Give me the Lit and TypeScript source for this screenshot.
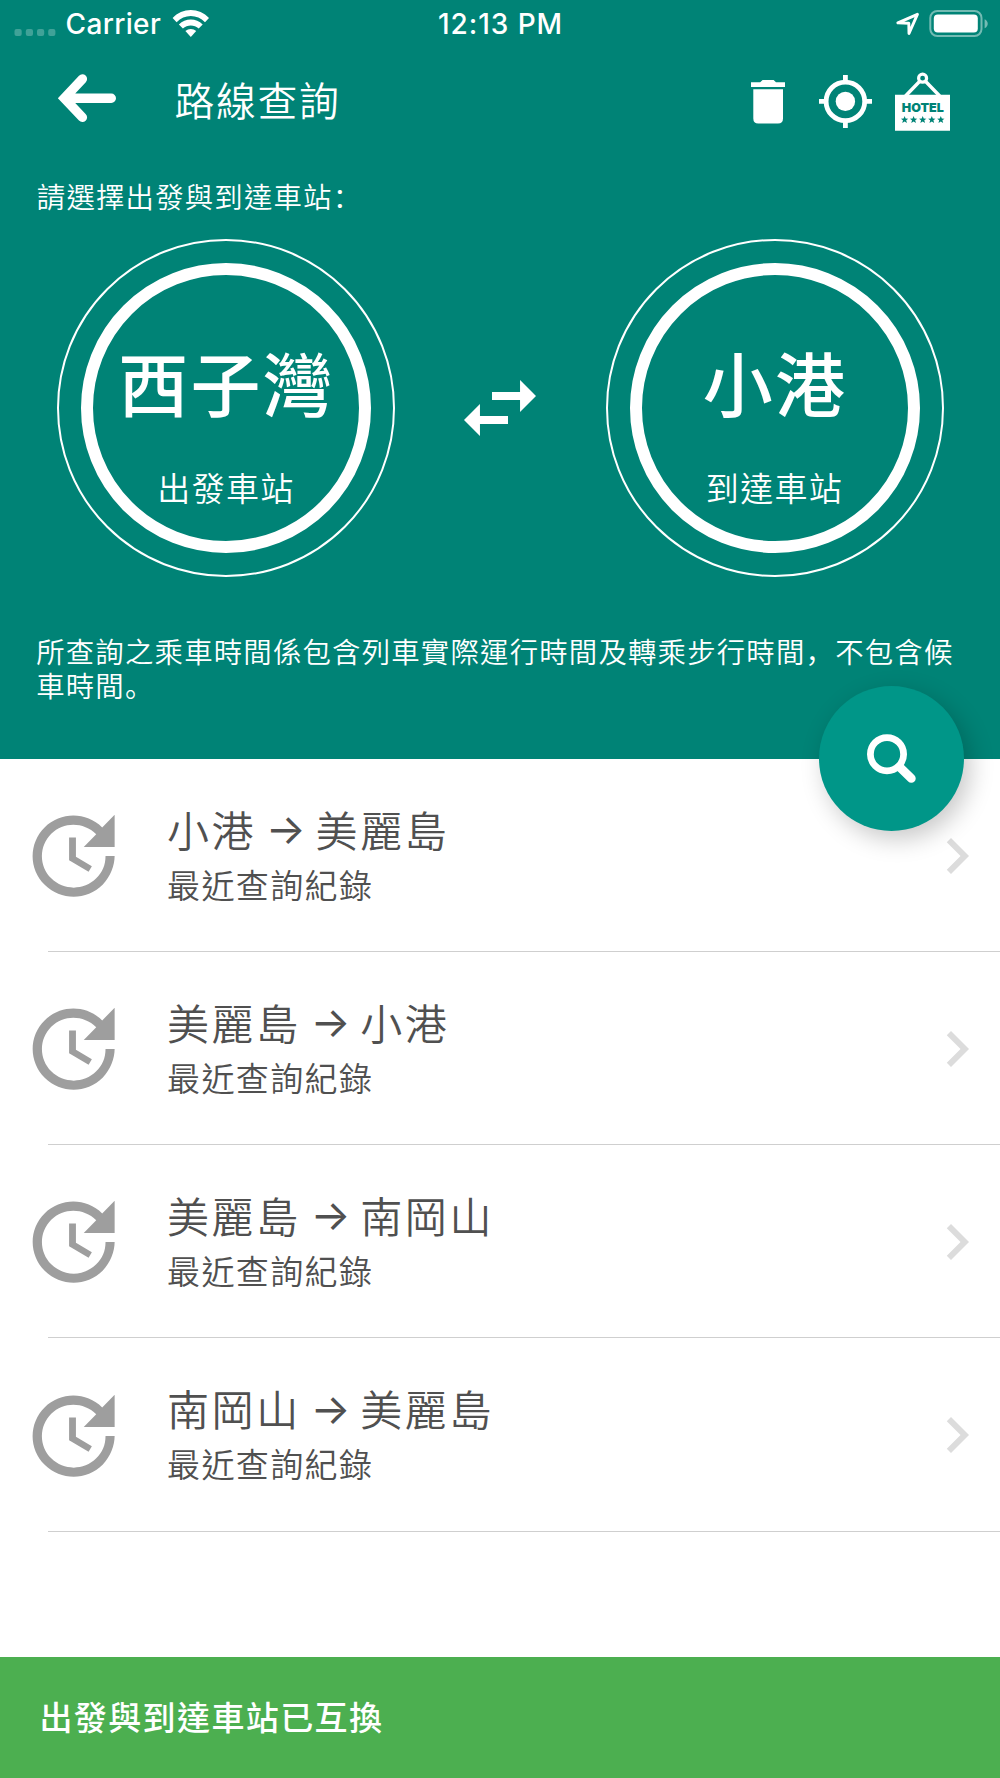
import { LitElement, html, css, svg } from "lit";
import { customElement, property } from "lit/decorators.js";

const FONT = css`"Noto Sans CJK TC", "Noto Sans CJK SC", sans-serif`;

const STAR = "M0 -3.8L1 -1.2L3.7 -1.15L1.6 .5L2.35 3.2L0 1.65L-2.35 3.2L-1.6 .5L-3.7 -1.15L-1 -1.2Z";

@customElement("status-bar")
class StatusBar extends LitElement {
  static styles = css`
    :host { display: flex; height: 48px; align-items: center; justify-content: space-between;
      font: 450 28px/48px Inter, sans-serif; color: #fff; }
    .side { display: flex; align-items: center; flex: 1 1 0; height: 48px; }
    .right { justify-content: flex-end; }
    .dots { margin-left: 14px; }
    .carrier { width: 106px; margin-left: 9.5px; letter-spacing: 0.35px; white-space: nowrap; }
    .wifi { margin-left: 0.5px; }
    .time { letter-spacing: 0.95px; margin-right: -1px; }
    svg { display: block; flex: none; }
  `;
  render() {
    return html`
      <div class="side">
        <svg class="dots" width="42" height="48" fill="#fff" fill-opacity=".25">
          ${[0.5, 11.8, 23, 34.2].map((x) => svg`<rect x=${x} y="29" width="7.2" height="7" rx="2" />`)}
        </svg>
        <span class="carrier">Carrier</span>
        <svg class="wifi" width="38" height="48" fill="#fff">
          <path d="M.6 18.1C10.1 7.4 27.5 7.4 37 18.1L33 22.2C25.2 14 12.4 14 4.6 22.2Z" />
          <path d="M6.9 24.6C13.3 17.9 24.3 17.9 30.7 24.6L26.7 28.6C22.3 24.4 15.3 24.4 10.9 28.6Z" />
          <path d="M13.4 31C16.4 28.2 21.2 28.2 24.2 31L18.8 37Z" />
        </svg>
      </div>
      <span class="time">12:13 PM</span>
      <div class="side right">
        <svg width="104" height="48">
          <path d="M21.4 14.3L1.9 22.8L12.8 23.2L13 33.5Z" fill="none" stroke="#fff" stroke-width="2.9" stroke-linejoin="round" />
          <rect x="34.3" y="11" width="51.2" height="25" rx="7" fill="none" stroke="#fff" stroke-opacity=".45" stroke-width="2" />
          <rect x="37.8" y="14.4" width="44" height="18.2" rx="4" fill="#fff" />
          <path d="M88.6 19.2C92.8 21 92.8 26.4 88.6 28.2Z" fill="#fff" fill-opacity=".45" />
        </svg>
      </div>
    `;
  }
}

@customElement("nav-bar")
class NavBar extends LitElement {
  static styles = css`
    :host { display: flex; height: 108px; color: #fff; }
    svg { display: block; flex: none; }
    .back { margin-left: 56px; }
    .title { margin-left: 56.5px; margin-top: 21px; flex: 1; font: 350 39.8px/60px ${FONT}; letter-spacing: 1.7px; }
    .actions { margin-right: 48px; }
    .sign { font: 900 12.2px Inter, sans-serif; fill: #008376; }
  `;
  render() {
    return html`
      <svg class="back" width="62" height="108" viewBox="56 48 62 108">
        <path d="M82.4 79L64.3 98.2L82.4 117.4M64.3 98.2H111.3" fill="none" stroke="#fff" stroke-width="9.4" stroke-linecap="round" stroke-linejoin="miter" />
      </svg>
      <div class="title">路線查詢</div>
      <svg class="actions" width="204" height="108" viewBox="748 48 204 108" fill="#fff">
        <path d="M751 82.3H760.2L762.6 80H773.6L776 82.3H785V87H751ZM753.3 89.2H783V118.6Q783 123.6 778 123.6H758.3Q753.3 123.6 753.3 118.6Z" />
        <circle cx="845.4" cy="101.4" r="9.7" />
        <circle cx="845.4" cy="101.4" r="19.3" fill="none" stroke="#fff" stroke-width="4.8" />
        <path d="M843 75h4.8v7h-4.8zM843 121h4.8v7h-4.8zM819 99h7v4.8h-7zM865 99h7v4.8h-7z" />
        <path d="M895 94.8H950V130.8H895Z" />
        <path d="M905.5 96L920 81M939.7 96L925.2 81" stroke="#fff" stroke-width="3.4" />
        <circle cx="922.6" cy="78.2" r="4" fill="none" stroke="#fff" stroke-width="3.2" />
        <text class="sign" x="901.8" y="112" textLength="42" lengthAdjust="spacingAndGlyphs">HOTEL</text>
        ${[904.6, 913.6, 922.7, 931.8, 940.8].map((x) => svg`<path d=${STAR} transform="translate(${x} 119.8)" fill="#008376" />`)}
      </svg>
    `;
  }
}

@customElement("station-dial")
class StationDial extends LitElement {
  @property() name = "";
  @property() label = "";
  static styles = css`
    :host { display: flex; box-sizing: border-box; width: 338px; height: 338px; padding: 22px;
      border: 2.3px solid #fff; border-radius: 50%; color: #fff; text-align: center; white-space: nowrap; }
    .ring { box-sizing: border-box; flex: 1; border: 12px solid #fff; border-radius: 50%;
      display: flex; flex-direction: column; align-items: center; }
    .name { margin-top: 66.5px; font: 500 70px/80px ${FONT}; letter-spacing: 2.2px; margin-right: -0.4px; }
    .label { margin-top: 45.5px; font: 350 33px/40px ${FONT}; letter-spacing: 1.3px; margin-right: 0.7px; }
  `;
  render() {
    return html`<div class="ring"><div class="name">${this.name}</div><div class="label">${this.label}</div></div>`;
  }
}

@customElement("history-row")
class HistoryRow extends LitElement {
  @property() from = "";
  @property() to = "";
  static styles = css`
    :host { position: relative; display: flex; height: 193.25px; color: #505050; }
    :host::after { content: ""; position: absolute; left: 48px; right: 0; height: 1px; margin-top: 192.3px; background: #cfcfcf; }
    svg { display: block; flex: none; }
    .clock { margin: 42.4px 0 0 19.3px; }
    .text { margin-left: 38.4px; flex: 1; padding-top: 40px; white-space: nowrap; }
    .route { font: 350 42px/60px ${FONT}; letter-spacing: 2.6px; height: 60px; }
    .arrow { display: inline-block; vertical-align: 2.6px; width: 59.4px; text-align: center; letter-spacing: 0; font: 400 42px/50px Inter, sans-serif; }
    .kind { font: 350 33px/50px ${FONT}; letter-spacing: 1.4px; }
    .chevron { margin: 61.2px 7px 0 0; }
  `;
  render() {
    return html`
      <svg class="clock" width="109.3" height="109.3" viewBox="0 0 24 24" fill="#9e9e9e">
        <path d="M21 10.12h-6.78l2.74-2.82c-2.73-2.7-7.15-2.8-9.88-.1-2.73 2.71-2.73 7.08 0 9.79s7.15 2.71 9.88 0C18.32 15.65 19 14.08 19 12.1h2c0 1.98-.88 4.55-2.64 6.29-3.51 3.48-9.21 3.48-12.72 0-3.5-3.47-3.53-9.11-.02-12.58s9.14-3.47 12.65 0L21 3v7.12zM12.5 8v4.25l3.5 2.08-.72 1.21L11 13V8h1.5z" />
      </svg>
      <div class="text">
        <div class="route">${this.from}<span class="arrow">→</span>${this.to}</div>
        <div class="kind">最近查詢紀錄</div>
      </div>
      <svg class="chevron" width="72" height="72" viewBox="0 0 24 24" fill="#dcdcdc">
        <path d="M8.59 16.59L13.17 12 8.59 7.41 10 6l6 6-6 6z" />
      </svg>
    `;
  }
}

@customElement("app-root")
class AppRoot extends LitElement {
  static styles = css`
    :host { display: flex; flex-direction: column; width: 1000px; height: 1778px; overflow: hidden; background: #fff; color: #fff; }
    .head { position: relative; flex: none; box-sizing: border-box; height: 758.5px; background: #008376; z-index: 1; }
    .prompt, .note { font: 350 28.4px/34px ${FONT}; letter-spacing: 1.2px; }
    .p { font-family: "Noto Sans CJK SC", sans-serif; }
    .prompt { margin: 23px 0 0 36.8px; }
    .stations { display: flex; align-items: center; justify-content: space-between; padding: 26.3px 56.2px 0 57.3px; }
    .swap { margin-right: 1.2px; }
    .note { margin: 56.5px 30px 0 36.2px; }
    .fab { position: absolute; right: 36px; bottom: -72.5px; width: 145px; height: 145px; border-radius: 50%;
      background: #009688; box-shadow: 6px 8px 25px rgba(0, 0, 0, 0.22); }
    svg { display: block; }
    .list { flex: 1; }
    .toast { flex: none; height: 121px; background: #4caf50; padding-left: 39.4px; font: 500 33px/118px ${FONT}; letter-spacing: 1.4px; }
  `;
  render() {
    const routes = [["小港", "美麗島"], ["美麗島", "小港"], ["美麗島", "南岡山"], ["南岡山", "美麗島"]];
    return html`
      <div class="head">
        <status-bar></status-bar>
        <nav-bar></nav-bar>
        <div class="prompt">請選擇出發與到達車站<span class="p">：</span></div>
        <div class="stations">
          <station-dial name="西子灣" label="出發車站"></station-dial>
          <svg class="swap" width="96" height="96" viewBox="0 0 24 24" fill="#fff">
            <path d="M6.99 11L3 15l3.99 4v-3H14v-2H6.99v-3zM21 9l-3.99-4v3H10v2h7.01v3L21 9z" />
          </svg>
          <station-dial name="小港" label="到達車站"></station-dial>
        </div>
        <div class="note">所查詢之乘車時間係包含列車實際運行時間及轉乘步行時間<span class="p">，</span>不包含候車時間<span class="p">。</span></div>
        <div class="fab">
          <svg width="145" height="145" viewBox="819 686 145 145" fill="none" stroke="#fff">
            <circle cx="887" cy="754.2" r="16.6" stroke-width="6.8" />
            <path d="M900 767.3L911.3 778.4" stroke-width="8.8" stroke-linecap="round" />
          </svg>
        </div>
      </div>
      <div class="list">
        ${routes.map(([a, b]) => html`<history-row from=${a} to=${b}></history-row>`)}
      </div>
      <div class="toast">出發與到達車站已互換</div>
    `;
  }
}
